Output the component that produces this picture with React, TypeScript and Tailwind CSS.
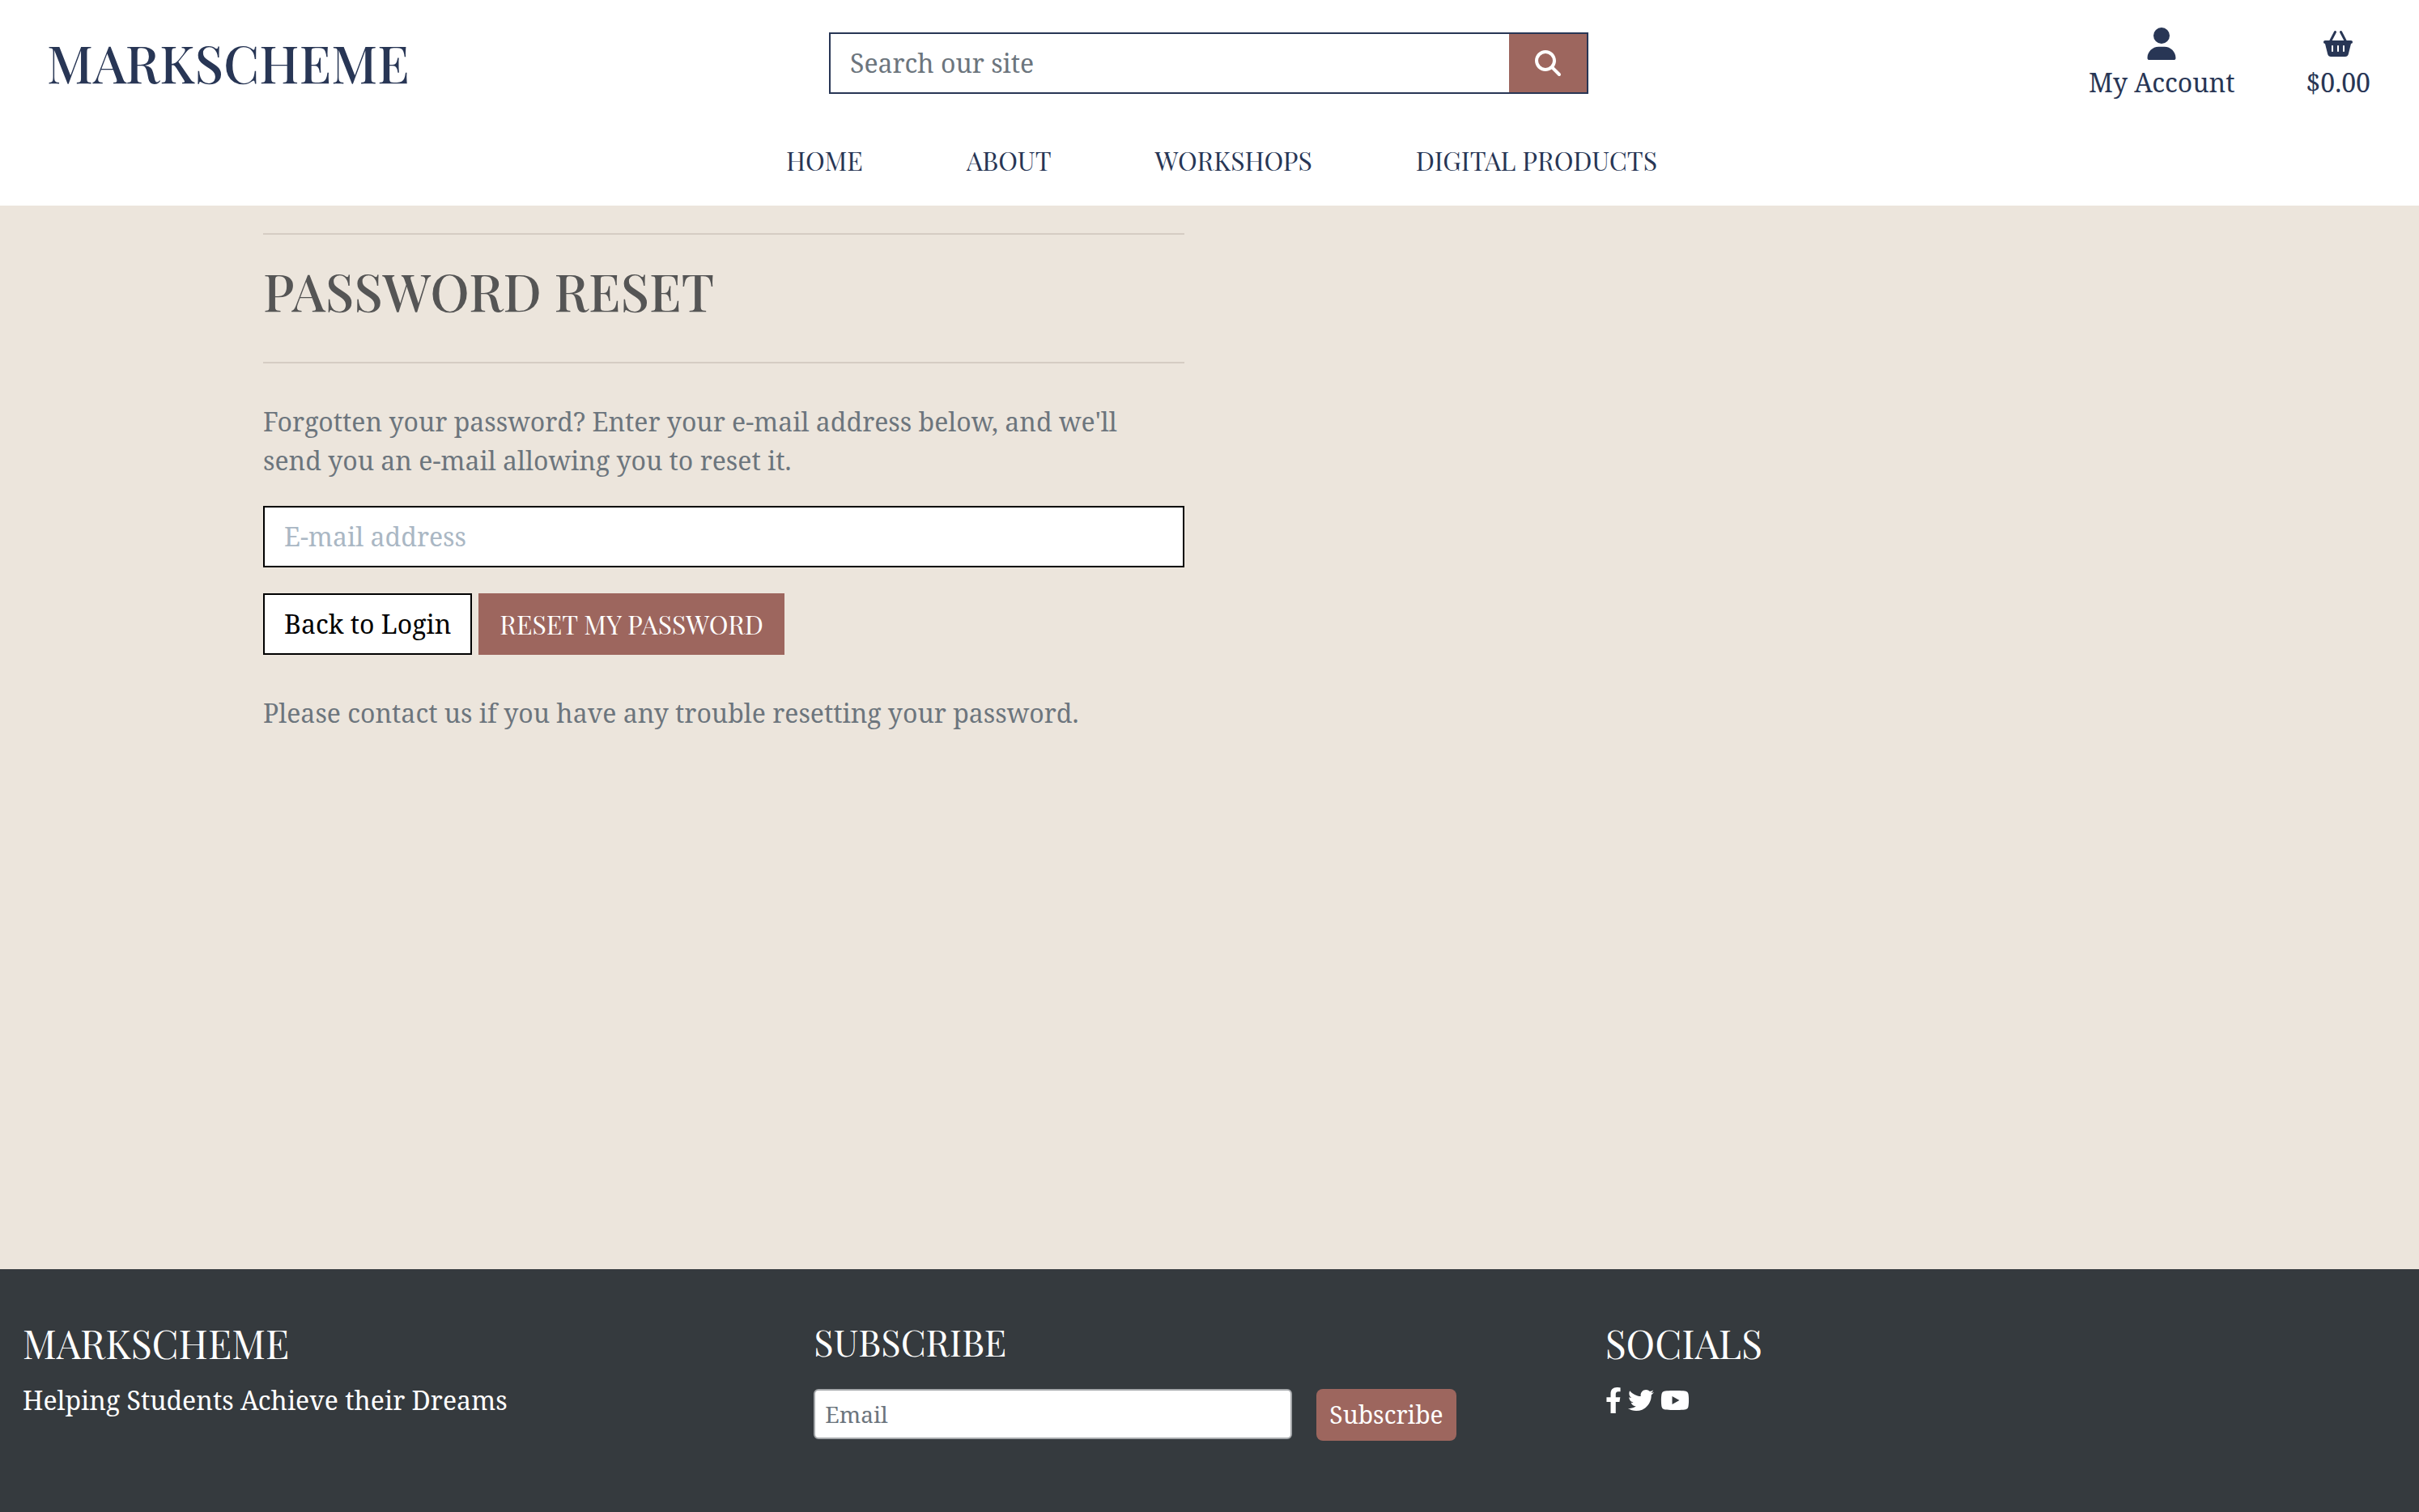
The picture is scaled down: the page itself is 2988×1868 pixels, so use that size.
import { FaFacebookF, FaTwitter, FaYoutube } from "react-icons/fa";
import { FaBasketShopping, FaMagnifyingGlass, FaUser } from "react-icons/fa6";

const navLinks = ["HOME", "ABOUT", "WORKSHOPS", "DIGITAL PRODUCTS"];

const socials = [
  { label: "Facebook", icon: <FaFacebookF className="h-8 w-5" /> },
  { label: "Twitter", icon: <FaTwitter className="size-8" /> },
  { label: "YouTube", icon: <FaYoutube className="h-8 w-9" /> },
];

function Header() {
  return (
    <header className="bg-white text-[#283655]">
      <div className="grid grid-cols-3 items-center py-[30px]">
        <a
          href="#"
          className="pb-1 pl-[58px] font-['Playfair_Display','Liberation_Serif',serif] text-[64px] leading-[77px] font-medium"
        >
          MARKSCHEME
        </a>
        <form className="pr-[30px] pl-7" onSubmit={(e) => e.preventDefault()}>
          <div className="flex border-2 border-[#283655]">
            <input
              type="text"
              aria-label="Search our site"
              placeholder="Search our site"
              className="min-w-0 flex-1 bg-white px-6 py-3 leading-[48px] outline-none placeholder:text-[#6c757d]"
            />
            <button
              type="submit"
              aria-label="Search"
              className="flex w-24 items-center justify-center bg-[#9d665e] text-white"
            >
              <FaMagnifyingGlass className="size-8" />
            </button>
          </div>
        </form>
        <div className="flex justify-end gap-[88px] pr-[60px]">
          <a href="#" className="flex flex-col items-center">
            <span className="flex h-12 items-center">
              <FaUser className="h-10 w-9" />
            </span>
            My Account
          </a>
          <a href="#" className="flex flex-col items-center">
            <span className="flex h-12 items-center">
              <FaBasketShopping className="h-8 w-9" />
            </span>
            $0.00
          </a>
        </div>
      </div>
      <nav className="flex justify-center gap-32 pt-[18px] pb-8 pl-[30px] font-['Playfair_Display','Liberation_Serif',serif]">
        {navLinks.map((label) => (
          <a key={label} href="#">
            {label}
          </a>
        ))}
      </nav>
    </header>
  );
}

function PasswordReset() {
  return (
    <main className="mx-auto grid w-full max-w-[2338px] flex-1 grid-cols-[1138px_1fr] content-start pt-[34px] text-[#6c757d]">
      <section>
        <hr className="border-t-2 border-[#d5ccc3]" />
        <h1 className="mt-[30px] mb-[50px] font-['Playfair_Display','Liberation_Serif',serif] text-[64px] leading-[77px] font-medium text-[#555555]">
          PASSWORD RESET
        </h1>
        <hr className="border-t-2 border-[#d5ccc3]" />
        <p className="mt-12 pr-6">
          Forgotten your password? Enter your e-mail address below, and we'll send you an e-mail
          allowing you to reset it.
        </p>
        <form className="mt-8" onSubmit={(e) => e.preventDefault()}>
          <input
            type="email"
            aria-label="E-mail address"
            placeholder="E-mail address"
            className="block w-full border-2 border-black bg-white px-6 py-3 leading-[48px] outline-none placeholder:text-[#aab7c4]"
          />
          <div className="mt-8 flex gap-2">
            <a href="#" className="border-2 border-black bg-white px-6 py-3 text-black">
              Back to Login
            </a>
            <button
              type="submit"
              className="border-2 border-[#9d665e] bg-[#9d665e] px-6 py-3 font-['Playfair_Display','Liberation_Serif',serif] text-white"
            >
              RESET MY PASSWORD
            </button>
          </div>
        </form>
        <p className="mt-12">Please contact us if you have any trouble resetting your password.</p>
      </section>
    </main>
  );
}

function Footer() {
  return (
    <footer className="grid grid-cols-3 bg-[#353a3e] px-7 pt-[62px] pb-[88px] text-white">
      <div>
        <h2 className="mb-[18px] font-['Playfair_Display','Liberation_Serif',serif] text-[48px] leading-[58px]">
          MARKSCHEME
        </h2>
        <p>Helping Students Achieve their Dreams</p>
      </div>
      <div>
        <h2 className="mb-8 font-['Playfair_Display','Liberation_Serif',serif] text-[45px] leading-[54px]">
          SUBSCRIBE
        </h2>
        <form className="flex items-start gap-[30px]" onSubmit={(e) => e.preventDefault()}>
          <input
            type="email"
            aria-label="Email"
            placeholder="Email"
            className="h-[62px] w-[591px] rounded-md border-2 border-[#a5a8ab] bg-white px-3 text-[28px] text-black outline-none placeholder:text-[#6c757d]"
          />
          <button type="submit" className="h-16 rounded-lg bg-[#9d665e] px-4 text-[30px]">
            Subscribe
          </button>
        </form>
      </div>
      <div>
        <h2 className="mb-[18px] font-['Playfair_Display','Liberation_Serif',serif] text-[48px] leading-[58px]">
          SOCIALS
        </h2>
        <div className="flex h-12 items-center gap-2">
          {socials.map(({ label, icon }) => (
            <a key={label} href="#" aria-label={label}>
              {icon}
            </a>
          ))}
        </div>
      </div>
    </footer>
  );
}

export default function App() {
  return (
    <div className="flex min-h-screen flex-col bg-[#ece5dc] font-['Noto_Serif','Liberation_Serif',serif] text-[32px] leading-[48px]">
      <Header />
      <PasswordReset />
      <Footer />
    </div>
  );
}
